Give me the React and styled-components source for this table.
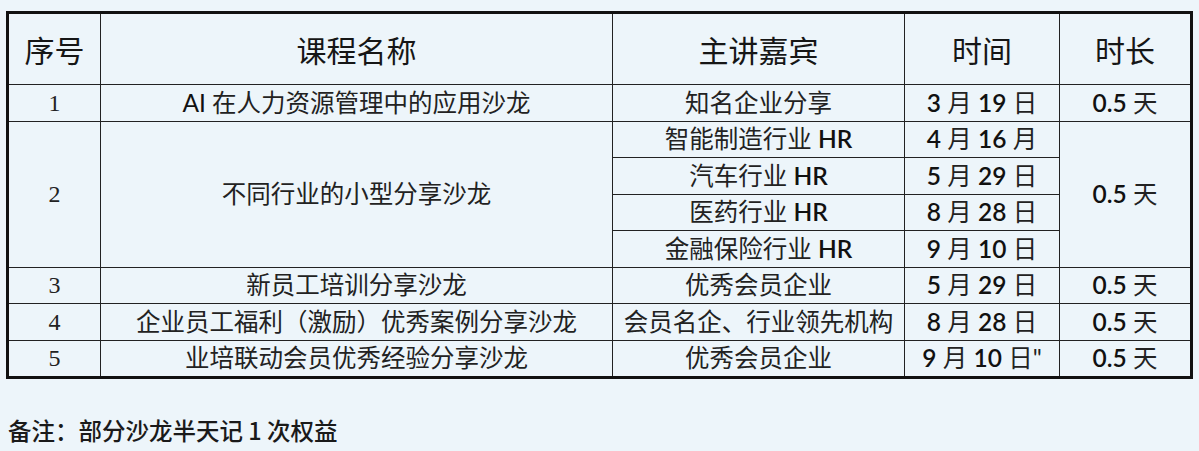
import React from 'react'
import styled, { createGlobalStyle } from 'styled-components'

const GlobalStyle = createGlobalStyle`
  html, body {
    margin: 0;
    padding: 0;
    background: #edf5fa;
  }
  body {
    font-family: Lato, "Noto Sans CJK SC", sans-serif;
    color: #1c1c1c;
  }
`

const Page = styled.div`
  width: 1199px;
  height: 451px;
  padding: 11px 0 0 6px;
  box-sizing: border-box;
  background: #edf5fa;
`

const Table = styled.table`
  width: 1184px;
  table-layout: fixed;
  border-collapse: collapse;
  border: 3px solid #111;
`

const HeadCell = styled.th`
  height: 70px;
  padding: 0;
  border: 1.5px solid #222;
  font-family: "Noto Sans CJK SC", sans-serif;
  font-size: 30px;
  font-weight: 400;
  color: #161616;
  text-align: center;
  vertical-align: middle;
`

const Cell = styled.td`
  height: 35.5px;
  padding: 0;
  border: 1.5px solid #222;
  font-family: ${p => (p.$serif ? '"Liberation Serif", serif' : 'Lato, "Noto Sans CJK SC", sans-serif')};
  font-size: ${p => (p.$serif ? 24 : 24.5)}px;
  font-weight: 400;
  line-height: 1;
  color: #222;
  text-align: center;
  vertical-align: middle;
  white-space: nowrap;
`

const Latin = styled.span`
  font-family: Lato, sans-serif;
  font-weight: ${p => (p.$light ? 400 : 600)};
  color: #111;
`

const Note = styled.p`
  margin: 40px 0 0 2px;
  font-family: "Noto Sans CJK SC", sans-serif;
  font-size: 23.5px;
  font-weight: 500;
  color: #1a1a1a;
  line-height: 1;
`

const Date = ({ m, d, tail }) => (
  <>
    <Latin>{m}</Latin> 月 <Latin>{d}</Latin> {tail || '日'}
  </>
)

const Days = () => (
  <>
    <Latin>0.5</Latin> 天
  </>
)

const singleRows = [
  { no: 3, name: '新员工培训分享沙龙', host: '优秀会员企业', m: 5, d: 29 },
  { no: 4, name: '企业员工福利（激励）优秀案例分享沙龙', host: '会员名企、行业领先机构', m: 8, d: 28 },
  { no: 5, name: '业培联动会员优秀经验分享沙龙', host: '优秀会员企业', m: 9, d: 10, quote: true },
]

const subRows = [
  { host: '智能制造行业', m: 4, d: 16, tail: '月' },
  { host: '汽车行业', m: 5, d: 29 },
  { host: '医药行业', m: 8, d: 28 },
  { host: '金融保险行业', m: 9, d: 10 },
]

export default function App() {
  return (
    <Page>
      <GlobalStyle />
      <Table>
        <colgroup>
          <col style={{ width: 93 }} />
          <col style={{ width: 512 }} />
          <col style={{ width: 292 }} />
          <col style={{ width: 155 }} />
          <col style={{ width: 132 }} />
        </colgroup>
        <thead>
          <tr>
            <HeadCell>序号</HeadCell>
            <HeadCell>课程名称</HeadCell>
            <HeadCell>主讲嘉宾</HeadCell>
            <HeadCell>时间</HeadCell>
            <HeadCell>时长</HeadCell>
          </tr>
        </thead>
        <tbody>
          <tr>
            <Cell $serif>1</Cell>
            <Cell>
              <Latin $light>AI</Latin> 在人力资源管理中的应用沙龙
            </Cell>
            <Cell>知名企业分享</Cell>
            <Cell><Date m={3} d={19} /></Cell>
            <Cell><Days /></Cell>
          </tr>
          {subRows.map((r, i) => (
            <tr key={r.host}>
              {i === 0 && (
                <>
                  <Cell $serif rowSpan={4}>2</Cell>
                  <Cell rowSpan={4}>不同行业的小型分享沙龙</Cell>
                </>
              )}
              <Cell>
                {r.host} <Latin>HR</Latin>
              </Cell>
              <Cell><Date m={r.m} d={r.d} tail={r.tail} /></Cell>
              {i === 0 && (
                <Cell rowSpan={4}><Days /></Cell>
              )}
            </tr>
          ))}
          {singleRows.map(r => (
            <tr key={r.no}>
              <Cell $serif>{r.no}</Cell>
              <Cell>{r.name}</Cell>
              <Cell>{r.host}</Cell>
              <Cell><Date m={r.m} d={r.d} tail={r.quote ? '日"' : '日'} /></Cell>
              <Cell><Days /></Cell>
            </tr>
          ))}
        </tbody>
      </Table>
      <Note>备注：部分沙龙半天记 1 次权益</Note>
    </Page>
  )
}
